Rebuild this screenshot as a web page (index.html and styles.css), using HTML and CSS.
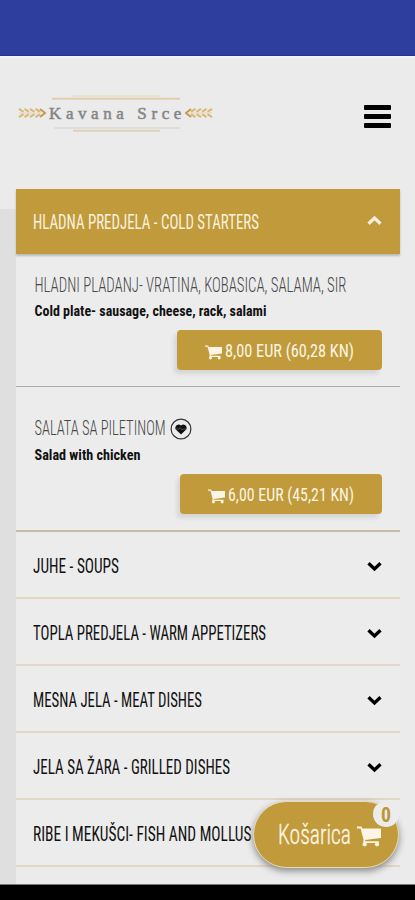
FILE: index.html
```html
<!DOCTYPE html>
<html lang="hr">
<head>
<meta charset="utf-8">
<title>Kavana Srce</title>
<link rel="stylesheet" href="styles.css">
</head>
<body>
<svg class="defs" width="0" height="0" aria-hidden="true">
  <symbol id="cart" viewBox="0 0 24 21">
    <path d="M0 .5H4.4L5.4 2.6H24V12L8 13.9L8.3 15.2H21.8V17H6.3L6.5 13.5L3.6 2.5H0Z"/>
    <circle cx="7.7" cy="18.3" r="2.1"/><circle cx="20" cy="18.3" r="2.1"/>
  </symbol>
  <symbol id="chevron" viewBox="0 0 16 11"><path d="M2 2.2L8 8L14 2.2" fill="none" stroke="currentColor" stroke-width="3.3"/></symbol>
  <symbol id="wheat" viewBox="0 0 28 12">
    <path d="M1 1.8L5.5 4.8M6.5 1.8L11 4.8M12 1.8L16.5 4.8M17.5 1.8L22 4.8M1 10.2L5.5 7.2M6.5 10.2L11 7.2M12 10.2L16.5 7.2M17.5 10.2L22 7.2" fill="none" stroke="#d6b878" stroke-width="2"/>
    <path d="M1 6H23" stroke="#e6d6b4" stroke-width="1"/>
    <path d="M22 2L27 6L22 10" fill="none" stroke="#c79b4a" stroke-width="2"/>
  </symbol>
</svg>
<div class="statusbar"></div>
<header class="top">
  <svg class="logo" width="198" height="40" viewBox="0 0 198 40">
    <path d="M56 3H144" stroke="#e6dccb" stroke-width="1.5"/>
    <path d="M35 5.8H163" stroke="#dfd0ab" stroke-width="2"/>
    <path d="M37 35H163" stroke="#dcdad5" stroke-width="1.5"/>
    <path d="M56 37.7H143" stroke="#dfd2b6" stroke-width="2"/>
    <use href="#wheat" x="1" y="14" width="28" height="12"/>
    <use href="#wheat" x="1" y="14" width="28" height="12" transform="translate(197 0) scale(-1 1)"/>
    <text x="32" y="25.5" class="logo-text">Kavana Srce</text>
  </svg>
  <div class="burger"><i></i><i></i><i></i></div>
</header>
<div class="page">
  <main class="menu">
    <section>
      <div class="row open">
        <svg class="label" width="226" height="20"><text y="17" textLength="226" lengthAdjust="spacingAndGlyphs">HLADNA PREDJELA - COLD STARTERS</text></svg>
        <svg class="chev up" width="17" height="11"><use href="#chevron"/></svg>
      </div>
      <article class="dish">
        <svg class="name" width="313" height="20"><text x=".5" y="17" textLength="312" lengthAdjust="spacingAndGlyphs">HLADNI PLADANJ- VRATINA, KOBASICA, SALAMA, SIR</text></svg>
        <svg class="desc" width="233" height="18"><text x=".5" y="12" textLength="232" lengthAdjust="spacingAndGlyphs">Cold plate- sausage, cheese, rack, salami</text></svg>
        <div class="price">
          <svg class="cart" width="17" height="15"><use href="#cart"/></svg>
          <svg class="amount" width="129" height="20"><text y="16.5" textLength="129" lengthAdjust="spacingAndGlyphs">8,00 EUR (60,28 KN)</text></svg>
        </div>
      </article>
      <article class="dish second">
        <div class="title">
          <svg class="name" width="131" height="20"><text x=".5" y="17" textLength="131" lengthAdjust="spacingAndGlyphs">SALATA SA PILETINOM</text></svg>
          <svg class="heart" width="22" height="22" viewBox="0 0 22 22"><circle cx="11" cy="11" r="9.9" fill="none" stroke="#333" stroke-width="1.2"/><path d="M11 16.5L5.8 11.6C3.9 8.5 8.2 4.3 11 7.6C13.8 4.3 18.1 8.5 16.2 11.6Z" fill="#111"/><path d="M6 11H9L10.3 9.8L12 12L13 11H16" fill="none" stroke="#777" stroke-width=".6"/></svg>
        </div>
        <svg class="desc" width="107" height="18"><text x=".5" y="12" textLength="106" lengthAdjust="spacingAndGlyphs">Salad with chicken</text></svg>
        <div class="price">
          <svg class="cart" width="17" height="15"><use href="#cart"/></svg>
          <svg class="amount" width="126" height="20"><text y="16.5" textLength="126" lengthAdjust="spacingAndGlyphs">6,00 EUR (45,21 KN)</text></svg>
        </div>
      </article>
    </section>
    <div class="row"><svg class="label" width="86" height="20"><text y="17" textLength="86" lengthAdjust="spacingAndGlyphs">JUHE - SOUPS</text></svg><svg class="chev" width="17" height="11"><use href="#chevron"/></svg></div>
    <div class="row"><svg class="label" width="233" height="20"><text y="17" textLength="233" lengthAdjust="spacingAndGlyphs">TOPLA PREDJELA - WARM APPETIZERS</text></svg><svg class="chev" width="17" height="11"><use href="#chevron"/></svg></div>
    <div class="row"><svg class="label" width="169" height="20"><text y="17" textLength="169" lengthAdjust="spacingAndGlyphs">MESNA JELA - MEAT DISHES</text></svg><svg class="chev" width="17" height="11"><use href="#chevron"/></svg></div>
    <div class="row"><svg class="label" width="197" height="20"><text y="17" textLength="197" lengthAdjust="spacingAndGlyphs">JELA SA ŽARA - GRILLED DISHES</text></svg><svg class="chev" width="17" height="11"><use href="#chevron"/></svg></div>
    <div class="row"><svg class="label" width="219" height="20"><text y="17" textLength="218.5" lengthAdjust="spacingAndGlyphs">RIBE I MEKUŠCI- FISH AND MOLLUS</text></svg></div>
  </main>
</div>
<footer class="navbar"></footer>
<div class="basket">
  <svg class="basket-text" width="73" height="30"><text y="24" textLength="73" lengthAdjust="spacingAndGlyphs">Košarica</text></svg>
  <svg class="basket-cart" width="24" height="21"><use href="#cart"/></svg>
  <div class="badge"><svg width="10" height="20"><text y="17.5" textLength="10" lengthAdjust="spacingAndGlyphs">0</text></svg></div>
</div>
</body>
</html>
```
FILE: styles.css
```css
* { box-sizing: border-box; }
body {
  margin: 0;
  height: 900px;
  overflow: hidden;
  display: flex;
  flex-direction: column;
  background: #ebebeb;
  font-family: "Roboto Condensed", Roboto, sans-serif;
}
svg { display: block; flex: none; overflow: visible; }
.defs { display: none; }
.statusbar { height: 56px; flex: none; background: #2e3e9e; border-bottom: 1px solid #2a3192; }
.top {
  height: 133px;
  flex: none;
  display: flex;
  justify-content: space-between;
  align-items: flex-start;
  padding: 37px 24px 0 17px;
  border-top: 2px solid #f3f3f4;
}
.logo { margin-top: -2px; }
.logo-text { font: 17px "Liberation Serif", serif; letter-spacing: 4.6px; fill: #858585; stroke: #858585; stroke-width: .5px; }
.burger { display: flex; flex-direction: column; gap: 4px; margin-top: 10px; width: 27px; }
.burger i { height: 5px; background: #000; border-radius: 1px; }
.page {
  flex: none;
  height: 695px;
  padding: 0 15px 0 16px;
  background: linear-gradient(#dfdfdf, #dfdfdf) 0 20px / 16px 100% no-repeat;
  overflow: hidden;
}
.menu { background: #ececec; }
.row {
  height: 67px;
  display: flex;
  align-items: center;
  justify-content: space-between;
  padding: 3px 17px 0;
  border-bottom: 2px solid #e2d6c5;
  color: #000;
}
.label { font-size: 19.5px; fill: #111; }
.row.open {
  height: 65px;
  padding-top: 1px;
  background: #c19b3b;
  border: 0;
  color: #f5eedc;
  box-shadow: 0 2px 2px #bbb;
  position: relative;
}
.open .label { fill: #f8f1df; }
.up { transform: rotate(180deg); }
.open .chev { margin-top: -3px; }
.dish { height: 133px; padding: 21px 18px 0; border-bottom: 1px solid #aaa; display: flex; flex-direction: column; }
.second { height: 145px; padding-top: 31px; border-bottom: 2px solid #cbb9a8; }
.name { font-size: 19.5px; font-weight: 300; fill: #484848; }
.title { display: flex; gap: 5px; height: 20px; }
.desc { margin-top: 9px; font-size: 14.5px; font-weight: 700; fill: #111; }
.second .desc { margin-top: 10px; }
.price {
  align-self: flex-end;
  height: 40px;
  margin-top: 8px;
  padding: 0 28px;
  display: flex;
  align-items: center;
  gap: 3px;
  border-radius: 4px;
  background: #c19b3b;
  box-shadow: -3px 4px 4px #d6d6d6;
}
.amount { font-size: 19px; fill: #fbf5e5; }
.cart { fill: #fbf5e5; margin-top: 4px; }
.navbar { flex: 1; background: #000; border-top: 1px solid #777; }
.basket {
  position: absolute;
  left: 253px;
  top: 801px;
  width: 146px;
  height: 67px;
  display: flex;
  align-items: center;
  padding-left: 24px;
  gap: 6px;
  border-radius: 34px;
  border: 1px solid #e9dcb9;
  background: #c19b3b;
  box-shadow: 0 3px 7px #888;
}
.basket-text { font-size: 28px; font-weight: 300; fill: #fdf6e6; stroke: #fdf6e6; stroke-width: .3px; }
.basket-cart { fill: #fdf6e6; margin-top: 3px; }
.badge {
  position: absolute;
  right: -1px;
  top: -1px;
  width: 26px;
  height: 26px;
  border-radius: 13px;
  background: #ececec;
  display: flex;
  justify-content: center;
  align-items: center;
  font-size: 21px;
  font-weight: 700;
}
.badge text { fill: #bd9539; }
```
